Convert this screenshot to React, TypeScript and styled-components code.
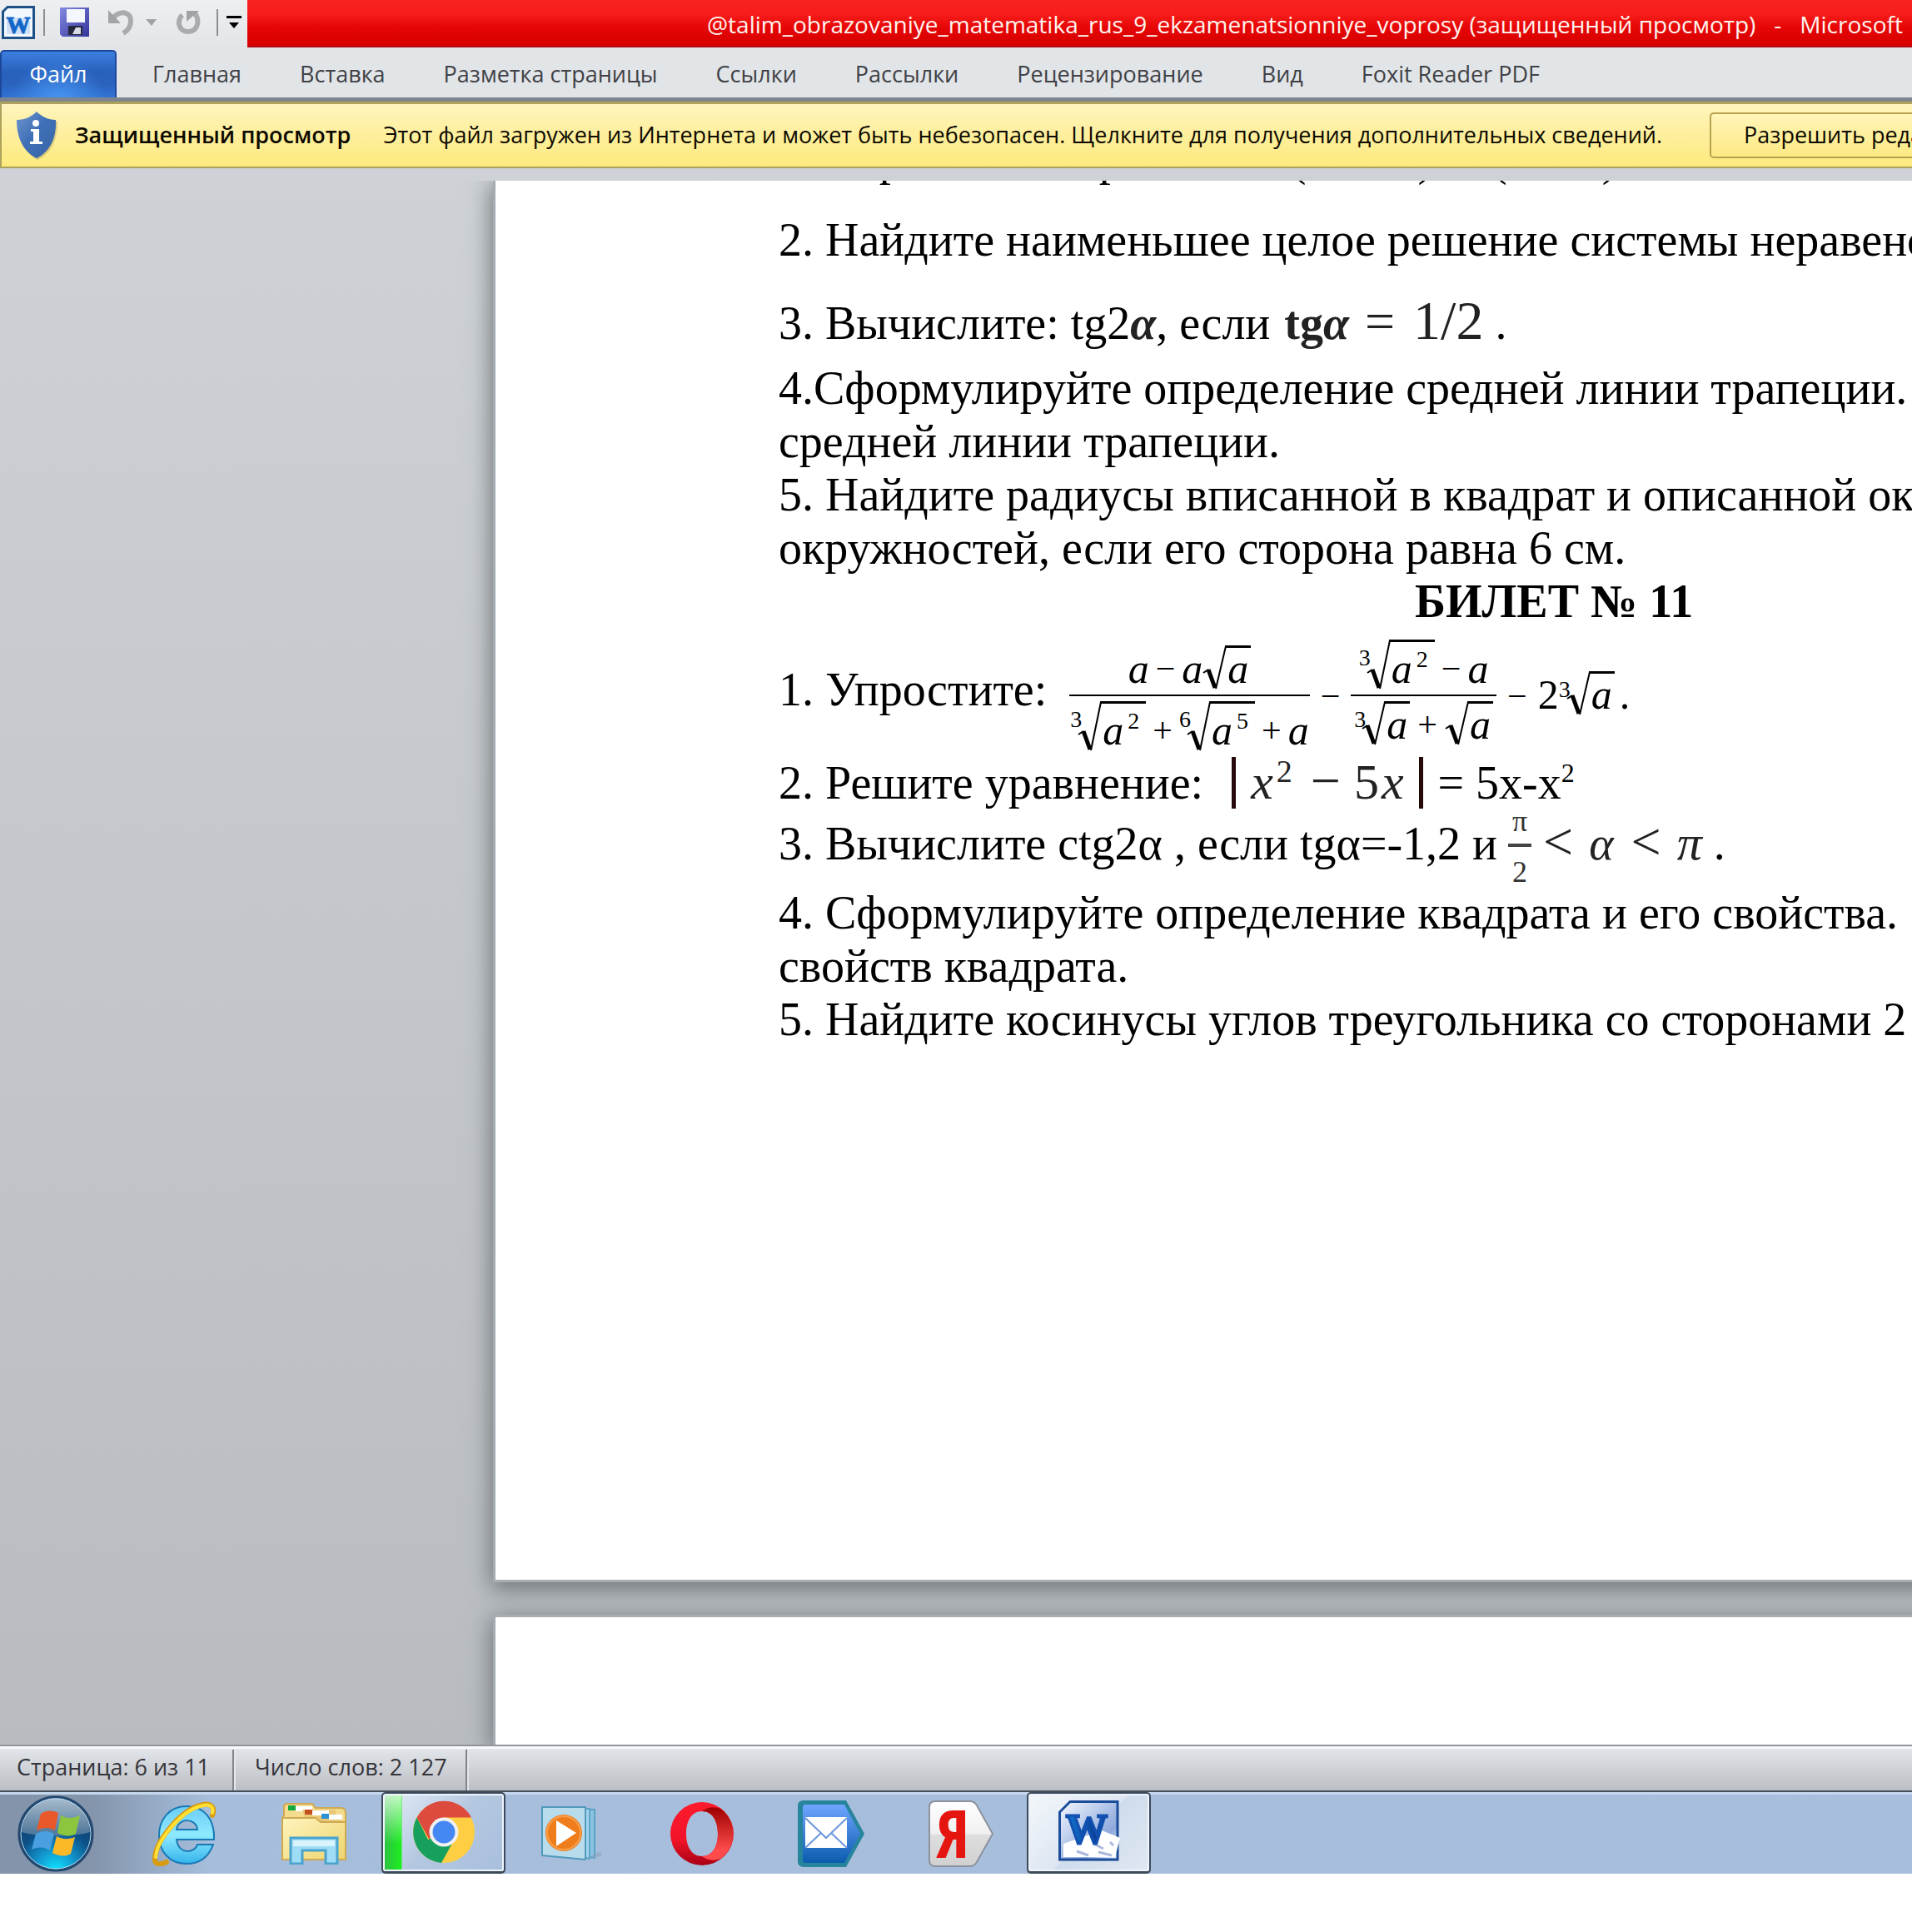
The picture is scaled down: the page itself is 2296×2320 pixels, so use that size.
import React from "react";
import styled, { createGlobalStyle, css } from "styled-components";

const UI_FONT = `"Open Sans", "Noto Sans", sans-serif`;
const DOC_FONT = `"Liberation Serif", "Times New Roman", serif`;

const GlobalStyle = createGlobalStyle`
  *, *::before, *::after { box-sizing: border-box; }
  body { margin: 0; background: #fff; font-family: ${UI_FONT}; }
  button { font: inherit; color: inherit; border: 0; background: none; padding: 0; margin: 0; cursor: pointer; }
  svg { display: block; flex: none; }
`;

const Screen = styled.div`
  display: flex;
  flex-direction: column;
  min-height: 100vh;
  padding-bottom: 70px;
  overflow: hidden;
  white-space: nowrap;
`;

/* ---------- title bar ---------- */

const TitleBar = styled.header`
  display: flex;
  height: 57px;
  background: linear-gradient(#eeeff1, #e2e5e8);
`;

const QuickAccess = styled.div`
  display: flex;
  align-items: center;
  flex: none;
  width: 297px;
  padding: 0 6px 4px 2px;
`;

const QuickButton = styled.button<{ $gap?: number }>`
  display: flex;
  margin-left: ${(p) => p.$gap ?? 0}px;
`;

const QuickDivider = styled.span<{ $gap: number }>`
  width: 2px;
  height: 32px;
  margin-left: ${(p) => p.$gap}px;
  background: #8e8e90;
`;

const Caption = styled.h1`
  display: flex;
  flex: 1;
  gap: 22px;
  min-width: 0;
  margin: 0;
  padding-left: 552px;
  overflow: hidden;
  font-size: 28px;
  font-weight: 400;
  line-height: 58px;
  color: #fff3ee;
  border-bottom: 2px solid #b50a12;
  background: linear-gradient(#f92320 0%, #f61d1b 30%, #e60606 60%, #d60000 100%);
`;

/* ---------- ribbon tabs ---------- */

const Tabs = styled.nav`
  display: flex;
  height: 65px;
  padding-top: 3px;
  background: #e2e5e8;
  border-bottom: 5px solid #7e858f;
`;

const tabText = css`
  font-size: 27px;
  line-height: 54px;
`;

const FileTab = styled.button`
  ${tabText}
  width: 140px;
  margin-right: 8px;
  padding-bottom: 4px;
  color: #fff;
  border: 2px solid #1c479c;
  border-bottom: 0;
  border-radius: 5px 5px 0 0;
  background: radial-gradient(ellipse at 50% 110%, #4795f2 0%, rgba(71, 149, 242, 0) 60%),
    linear-gradient(#3c7fdf 0%, #2861bb 45%, #2a62bd 70%, #3173d3 100%);
`;

const Tab = styled.button`
  ${tabText}
  padding: 0 35px;
  color: #404146;
`;

/* ---------- protected view bar ---------- */

const MessageBar = styled.div`
  display: flex;
  align-items: center;
  height: 80px;
  padding-left: 18px;
  border: solid #ada15c;
  border-width: 3px 0 2px 2px;
  background: linear-gradient(#fff4bd, #fdea7d);
  font-size: 27px;
  color: #0d0a00;
`;

const MessageTitle = styled.strong`
  margin-left: 21px;
  padding-bottom: 3px;
  font-weight: 600;
`;

const MessageText = styled.span`
  margin-left: 39px;
  padding-bottom: 3px;
`;

const EnableButton = styled.button`
  height: 55px;
  margin-left: 57px;
  padding: 0 39px 3px;
  border: 2px solid #b5a34d;
  border-radius: 5px;
  background: linear-gradient(#fff5b8, #fdea83);
`;

/* ---------- document ---------- */

const Workspace = styled.main`
  display: flex;
  flex-direction: column;
  flex: 1;
  min-height: 0;
  padding-top: 15px;
  background: linear-gradient(#ced2d6, #b8bcc1);
`;

const Sheets = styled.div`
  display: flex;
  flex-direction: column;
  flex: 1;
  gap: 39px;
  padding-left: 592px;
  overflow: hidden;
`;

const Sheet = styled.article<{ $last?: boolean }>`
  flex: ${(p) => (p.$last ? "1 0 60px" : "none")};
  height: ${(p) => (p.$last ? "auto" : "1683px")};
  margin-right: -40px;
  padding-left: 340px;
  overflow: hidden;
  border-left: 3px solid #a3abb3;
  border-top: ${(p) => (p.$last ? "3px solid #a9adb2" : "0")};
  border-bottom: ${(p) => (p.$last ? "0" : "3px solid #a9adb1")};
  background: #fff;
  box-shadow: 0 6px 26px 2px #6f7477;
  font-family: ${DOC_FONT};
  font-size: 56px;
  line-height: 64px;
  color: #000;
`;

const Paragraph = styled.p<{ $after?: number; $cut?: boolean }>`
  margin: ${(p) => (p.$cut ? "-58px" : "0")} 0 ${(p) => p.$after ?? 0}px;
`;

const TicketTitle = styled.h2`
  margin: 0 0 0 764px;
  font-size: 56px;
  font-weight: 700;
  line-height: 64px;
`;

const Blank = styled.span<{ $w: number }>`
  display: inline-block;
  width: ${(p) => p.$w}px;
`;

const Cambria = styled.span<{ $size?: number; $bold?: boolean; $italic?: boolean; $left?: number }>`
  margin-left: ${(p) => p.$left ?? 0}px;
  font-size: ${(p) => p.$size ?? 56}px;
  font-weight: ${(p) => (p.$bold ? 700 : 400)};
  font-style: ${(p) => (p.$italic ? "italic" : "normal")};
  line-height: 0;
  color: #222;
`;

const Power = styled.sup<{ $size?: number }>`
  font-size: ${(p) => p.$size ?? 32}px;
  line-height: 0;
`;

const Bar = styled.span<{ $left: number }>`
  display: inline-block;
  width: 5px;
  height: 62px;
  margin: -10px 18px 0 ${(p) => p.$left}px;
  vertical-align: -12px;
  background: #26090a;
`;

/* ---------- equation ---------- */

const EquationRow = styled.div`
  display: flex;
  align-items: center;
  height: 154px;
`;

const EquationLabel = styled.span`
  padding-bottom: 6px;
`;

const Equation = styled.div`
  display: flex;
  align-items: center;
  gap: 13px;
  margin-left: 27px;
  padding-top: 10px;
  font-size: 50px;
  line-height: 50px;
`;

const Fraction = styled.div`
  display: flex;
  flex-direction: column;
`;

const FractionPart = styled.div<{ $top?: boolean; $pad?: number }>`
  display: flex;
  align-items: ${(p) => (p.$top ? "flex-end" : "flex-start")};
  justify-content: center;
  height: 68px;
  padding: ${(p) => (p.$top ? "0 0 6px" : `6px ${p.$pad ?? 1}px 0`)};
  border-bottom: ${(p) => (p.$top ? "2px solid #000" : "0")};
`;

const Row = styled.span<{ $gap?: number; $lift?: boolean }>`
  display: flex;
  align-items: flex-end;
  gap: ${(p) => p.$gap ?? 0}px;
  padding-bottom: ${(p) => (p.$lift ? 8 : 0)}px;
`;

const Var = styled.i`
  display: block;
`;

const Sign = styled.span`
  display: block;
  font-size: 42px;
`;

const RootBox = styled.span`
  display: flex;
  align-items: stretch;
`;

const RootIndex = styled.span`
  width: 9px;
  padding-top: 5px;
  font-size: 28px;
  line-height: 34px;
`;

const Radicand = styled.span<{ $wide?: boolean }>`
  display: flex;
  padding: ${(p) => (p.$wide ? "7px 8px 0 1px" : "0 3px 0 1px")};
  border-top: 3px solid #000;
`;

const RadicandPower = styled.span`
  margin-left: 5px;
  font-size: 28px;
  line-height: 28px;
`;

const SmallFraction = styled.span`
  display: inline-flex;
  flex-direction: column;
  align-items: center;
  width: 28px;
  margin: -30px 0 -30px 13px;
  vertical-align: middle;
  font-size: 36px;
  line-height: 44px;
  color: #333;
`;

const SmallTop = styled.span`
  width: 28px;
  margin-bottom: 8px;
  padding-bottom: 10px;
  border-bottom: 4px solid #444;
  line-height: 34px;
  text-align: center;
`;

function Root({ index, power }: { index?: string; power?: string }) {
  const h = power ? 56 : 49;
  return (
    <RootBox>
      {index && <RootIndex>{index}</RootIndex>}
      <svg width="29" height={h + 4} viewBox={`0 0 29 ${h + 4}`} fill="none" stroke="#000">
        <path d={`M1 ${h - 16} L7 ${h - 20}`} strokeWidth="2" />
        <path d={`M7 ${h - 20} L15 ${h + 2}`} strokeWidth="5" />
        <path d={`M16 ${h + 3} L28 1`} strokeWidth="2" />
        <path d="M27 1.5 H29" strokeWidth="3" />
      </svg>
      <Radicand $wide={!!power}>
        <Var>a</Var>
        {power && <RadicandPower>{power}</RadicandPower>}
      </Radicand>
    </RootBox>
  );
}

/* ---------- status bar ---------- */

const StatusBar = styled.footer`
  display: flex;
  height: 57px;
  border-top: 2px solid #90959b;
  border-bottom: 2px solid #454e59;
  box-shadow: inset 0 3px 0 #f7f9fd;
  background: linear-gradient(#e4e7eb, #bbbfc4);
`;

const StatusItem = styled.button<{ $first?: boolean }>`
  margin-top: 4px;
  padding: 0 ${(p) => (p.$first ? 27 : 22)}px 8px ${(p) => (p.$first ? 20 : 25)}px;
  border-right: 2px solid #80848a;
  box-shadow: 2px 0 0 #e4e6ea;
  font-size: 27px;
  line-height: 40px;
  color: #36343a;
`;

/* ---------- taskbar ---------- */

const Taskbar = styled.nav`
  display: flex;
  height: 98px;
  border-top: 3px solid #c5d7ec;
  background: linear-gradient(90deg, #8394ab 0, #8394ab 110px, #a6bedb 250px, #a7bfdc 100%);
`;

const TaskButton = styled.button<{ $width: number; $gap?: number; $active?: "chrome" | "word" }>`
  display: flex;
  align-items: center;
  justify-content: center;
  flex: none;
  width: ${(p) => p.$width}px;
  margin-left: ${(p) => p.$gap ?? 0}px;
  padding-bottom: 2px;
  ${(p) =>
    p.$active &&
    css`
      margin-top: -3px;
      border: 2px solid #3d4a5c;
      border-bottom-width: 3px;
      border-radius: 5px;
      box-shadow: inset 0 0 0 2px #eef4fc;
      background: ${p.$active === "word"
        ? "linear-gradient(135deg, #f4f7fb 0%, #dde6f2 50%, #cfdcec 52%, #e0e8f3 100%)"
        : "linear-gradient(rgba(255,255,255,.75) 0, rgba(255,255,255,0) 60px) 0 0 / 22px 100% no-repeat, linear-gradient(90deg, #2ebd45 0, #1df01d 22px, rgba(0,0,0,0) 23px), linear-gradient(135deg, #e6eef8 0%, #b4c7e0 50%, #a8bfdd 100%)"};
    `}
`;

/* ---------- icons ---------- */

const WordSmall = () => (
  <svg width="40" height="40" viewBox="0 0 40 40">
    <path d="M7 1.5H38.500V38.500H1.500V7Z" fill="#f3f8ff" stroke="#1f5189" strokeWidth="3" />
    <rect x="6" y="14" width="28" height="20" fill="#cfe0f6" />
    <text x="20" y="33" textAnchor="middle" fontFamily="Liberation Serif" fontWeight="700" fontSize="29" fill="#1367c8" stroke="#1367c8">W</text>
  </svg>
);

const SaveIcon = () => (
  <svg width="36" height="36" viewBox="0 0 36 36">
    <defs>
      <linearGradient id="save" x1="0" x2="1" y2="1">
        <stop offset="0" stopColor="#8489e0" />
        <stop offset="1" stopColor="#34349c" />
      </linearGradient>
    </defs>
    <path d="M0 0H35V35H3L0 32Z" fill="url(#save)" />
    <rect x="8" y="2" width="22" height="16" fill="#f4f7fd" />
    <rect x="10" y="22" width="17" height="11" fill="#25283c" />
    <path d="M19 24H25V32H15Z" fill="#d8dbe6" />
  </svg>
);

const UndoIcon = () => (
  <svg width="32" height="32" viewBox="0 0 32 32">
    <path d="M7 10C16 1 28 3 28 14C28 21 24 26 19 29" fill="none" stroke="#aaabad" strokeWidth="6" />
    <path d="M1 1V17H16Z" fill="#a2a3a5" />
  </svg>
);

const RepeatIcon = () => (
  <svg width="30" height="32" viewBox="0 0 30 32">
    <path d="M8 7C1 13 3 27 15 27C27 27 29 13 23 5" fill="none" stroke="#aaabad" strokeWidth="6" />
    <path d="M13 15V2H28Z" fill="#a2a3a5" />
  </svg>
);

const SmallArrow = () => (
  <svg width="13" height="8" viewBox="0 0 13 8">
    <path d="M0 0H13L7 8Z" fill="#a0a1a4" />
  </svg>
);

const CustomizeIcon = () => (
  <svg width="18" height="16" viewBox="0 0 18 16">
    <path d="M0 0H18V3H0ZM3 8H15L9 15Z" fill="#000" />
  </svg>
);

const ShieldIcon = () => (
  <svg width="49" height="58" viewBox="0 0 49 58">
    <defs>
      <linearGradient id="shield" x1="0" x2="1" y2="1">
        <stop offset="0" stopColor="#6f97cf" />
        <stop offset="0.45" stopColor="#3f70b7" />
        <stop offset="1" stopColor="#3863a4" />
      </linearGradient>
    </defs>
    <path d="M24 3C30 9 38 12 49 12C49 34 42 50 25 58C10 50 2 34 2 12C12 12 19 9 24 3Z" fill="#a89d63" opacity=".45" />
    <path d="M24 0C30 6 38 10 47 10C48 32 40 48 24 56C8 48 0 32 0 10C10 10 18 6 24 0Z" fill="url(#shield)" />
    <circle cx="23" cy="14" r="4" fill="#fff" />
    <path d="M17 21H27V36H31V39H16V36H20V24H17Z" fill="#fff" />
  </svg>
);

const StartIcon = () => (
  <svg width="92" height="92" viewBox="0 0 92 92">
    <defs>
      <radialGradient id="orb" cx=".5" cy="1" r=".9">
        <stop offset="0" stopColor="#0fe6ff" />
        <stop offset=".3" stopColor="#1298cf" />
        <stop offset=".62" stopColor="#0c4f86" />
        <stop offset="1" stopColor="#1b4068" />
      </radialGradient>
      <linearGradient id="gloss" x2="0" y2="1">
        <stop offset="0" stopColor="#d7e6f1" />
        <stop offset="1" stopColor="#5d809c" />
      </linearGradient>
    </defs>
    <circle cx="46" cy="46" r="44" fill="url(#orb)" stroke="#23476e" strokeWidth="3" />
    <path d="M5 44A41 41 0 0 1 87 44C70 50 22 50 5 44Z" fill="url(#gloss)" opacity=".75" />
    <circle cx="46" cy="46" r="42" fill="none" stroke="#b5d6ea" strokeWidth="1" />
    <path d="M28 22C35 17 43 18 49 21L45 42C38 38 31 38 23 42Z" fill="#e9582a" />
    <path d="M52 24C59 28 67 28 75 24L70 46C63 50 55 49 48 45Z" fill="#8cc63f" />
    <path d="M22 46C30 42 37 42 44 46L39 66C33 62 26 61 17 65Z" fill="#4a9fe0" />
    <path d="M47 49C54 53 61 53 69 50L64 70C57 74 49 73 42 69Z" fill="#fdb827" />
  </svg>
);

const ExplorerEIcon = () => (
  <svg width="78" height="78" viewBox="0 0 78 78">
    <defs>
      <linearGradient id="ie" x2="0" y2="1">
        <stop offset="0" stopColor="#6bcdf5" />
        <stop offset=".5" stopColor="#8eeaff" />
        <stop offset="1" stopColor="#35b4ec" />
      </linearGradient>
    </defs>
    <path d="M75 46H30C32 64 52 63 55 52H74C68 68 57 75 42 75C22 75 9 61 9 41C9 20 23 6 42 6C63 6 76 21 75 46ZM30 34H55C54 20 32 19 30 34Z" fill="url(#ie)" stroke="#1979b4" strokeWidth="2" />
    <path d="M73 17C77 6 70 1 58 5C34 12 5 48 4 68C3 76 10 77 18 73" fill="none" stroke="#d89b12" strokeWidth="6" strokeLinecap="round" />
    <path d="M73 14C75 6 69 2 58 6C34 13 6 48 5 67" fill="none" stroke="#ffe033" strokeWidth="4" strokeLinecap="round" />
  </svg>
);

const FolderIcon = () => (
  <svg width="80" height="74" viewBox="0 0 80 74">
    <defs>
      <linearGradient id="folder" x2="1" y2="1">
        <stop offset="0" stopColor="#fff4bd" />
        <stop offset="1" stopColor="#edd46f" />
      </linearGradient>
    </defs>
    <path d="M4 4Q4 1 8 1H38L42 6H72Q78 6 78 12V68H2V18L4 15Z" fill="#f3dc8d" stroke="#cfa951" strokeWidth="2" />
    <rect x="18" y="4" width="20" height="6" fill="#fff" /><rect x="9" y="3" width="9" height="6" fill="#12a83b" />
    <path d="M26 8H66V14H74V22H30Z" fill="#e9c977" />
    <rect x="38" y="9" width="20" height="6" fill="#fff" /><rect x="29" y="8" width="9" height="6" fill="#c5501f" />
    <rect x="58" y="14" width="16" height="6" fill="#fff" /><rect x="49" y="13" width="9" height="6" fill="#2c8fd4" />
    <path d="M2 18H42L48 23H78V68H2Z" fill="url(#folder)" stroke="#cfa951" strokeWidth="2" />
    <path d="M12 73V42H68V73H54V57H26V73Z" fill="#9fdcf5" stroke="#4ba3cc" strokeWidth="3" />
    <path d="M15 45H65V52H15Z" fill="#d8f3fc" />
  </svg>
);

const ChromeIcon = () => (
  <svg width="76" height="76" viewBox="0 0 76 76">
    <circle cx="38" cy="38" r="37" fill="#ffce43" />
    <path d="M38 38L19 47L5.600 20.500A37 37 0 0 0 35 74.900L50 48Z" fill="#17a05d" />
    <path d="M38 38L20 46L5.600 20.500A37 37 0 0 1 71 20.500H38Z" fill="#dc4b3e" />
    <circle cx="38" cy="38" r="17.500" fill="#f1f1f1" />
    <circle cx="38" cy="38" r="13.500" fill="#4587f3" />
  </svg>
);

const MediaIcon = () => (
  <svg width="72" height="66" viewBox="0 0 72 66">
    <path d="M12 4H64V62L52 60Z" fill="#8cc3e0" stroke="#5ba3c8" strokeWidth="2" />
    <path d="M8 3H58V63L46 60Z" fill="#a5d3ea" stroke="#5ba3c8" strokeWidth="2" />
    <path d="M1 1H53V64L1 59Z" fill="#b9dcec" stroke="#5199bd" strokeWidth="2" />
    <path d="M62 58L72 54V60L58 63Z" fill="#889bb5" opacity=".5" />
    <circle cx="27" cy="32" r="22" fill="#f07d1c" />
    <circle cx="27" cy="32" r="20" fill="none" stroke="#fb9e48" strokeWidth="2" />
    <path d="M18 17V48L42 32Z" fill="#fff" />
  </svg>
);

const OperaIcon = () => (
  <svg width="76" height="76" viewBox="0 0 76 76">
    <defs>
      <linearGradient id="operaL" x2="0" y2="1">
        <stop offset="0" stopColor="#ff1b2d" /><stop offset=".6" stopColor="#f01428" /><stop offset="1" stopColor="#a70014" />
      </linearGradient>
      <linearGradient id="operaR" x2="0" y2="1">
        <stop offset="0" stopColor="#9c0000" /><stop offset=".8" stopColor="#ff4b4b" />
      </linearGradient>
    </defs>
    <path fillRule="evenodd" d="M38 0A38 38 0 1 0 38 76A38 38 0 1 0 38 0ZM38 11C50 11 57 22 57 38S50 65 38 65S19 54 19 38S26 11 38 11Z" fill="url(#operaL)" />
    <path d="M38 11C44 6 55 4 63 10A38 38 0 0 1 63 66C55 72 44 70 38 65C50 65 57 54 57 38S50 11 38 11Z" fill="url(#operaR)" />
  </svg>
);

const MailIcon = () => (
  <svg width="80" height="80" viewBox="0 0 80 80">
    <defs>
      <linearGradient id="mail" x2="0" y2="1">
        <stop offset="0" stopColor="#6ea5ff" /><stop offset="1" stopColor="#0a5caf" />
      </linearGradient>
    </defs>
    <path d="M7 0H58L80 40L58 80H7Q0 80 0 73V7Q0 0 7 0Z" fill="#27849d" />
    <path d="M9 5H56L75 40L56 75H9Q6 75 6 71V9Q6 5 9 5Z" fill="url(#mail)" />
    <rect x="9" y="20" width="50" height="37" fill="#fff" />
    <path d="M9 21L34 45L59 21M9 57L28 39M59 57L40 39" fill="none" stroke="#6d96dd" strokeWidth="2" />
  </svg>
);

const YandexIcon = () => (
  <svg width="78" height="80" viewBox="0 0 78 80">
    <defs>
      <linearGradient id="ya" x2="0" y2="1">
        <stop offset="0" stopColor="#fff" /><stop offset=".5" stopColor="#f0f0f0" /><stop offset=".52" stopColor="#dedede" /><stop offset="1" stopColor="#d0d0d0" />
      </linearGradient>
    </defs>
    <path d="M8 1H50Q55 1 58 6L77 40L58 74Q55 79 50 79H8Q1 79 1 72V8Q1 1 8 1Z" fill="url(#ya)" stroke="#8d929e" strokeWidth="2" />
    <text x="29" y="69" textAnchor="middle" fontFamily="Liberation Sans Narrow, Open Sans Condensed, Roboto Condensed, Liberation Sans" fontSize="80" fill="#e5150f">Я</text>
  </svg>
);

const WordLargeIcon = () => (
  <svg width="74" height="76" viewBox="0 0 74 76">
    <defs>
      <linearGradient id="word" x2="1" y2="1">
        <stop offset="0" stopColor="#f4f8ff" /><stop offset=".7" stopColor="#8ea9dc" /><stop offset="1" stopColor="#f4f8ff" />
      </linearGradient>
      <linearGradient id="wordW" x2="1">
        <stop offset="0" stopColor="#0f78d0" /><stop offset="1" stopColor="#0b2a86" />
      </linearGradient>
    </defs>
    <path d="M14 2H72V73H1V15Z" fill="#8f99a8" opacity=".5" />
    <path d="M14 1.500H71V71H1.500V14Z" fill="url(#word)" stroke="#1c4d9b" strokeWidth="3" />
    <path d="M6 52L52 36L74 45L68 68H6Z" fill="#fff" />
    <path d="M22 61L36 66M42 52L54 58M48 62L64 66M62 50L66 54" stroke="#aab8dc" strokeWidth="3" />
    <text x="34" y="51" textAnchor="middle" fontFamily="Liberation Serif" fontWeight="700" fontSize="50" fill="url(#wordW)" stroke="#1251b0" strokeWidth="3">W</text>
  </svg>
);

const TABS = ["Главная", "Вставка", "Разметка страницы", "Ссылки", "Рассылки", "Рецензирование", "Вид", "Foxit Reader PDF"];

export default function App() {
  return (
    <>
      <GlobalStyle />
      <Screen>
        <TitleBar>
          <QuickAccess>
            <QuickButton aria-label="Word"><WordSmall /></QuickButton>
            <QuickDivider $gap={10} />
            <QuickButton $gap={18} aria-label="Сохранить"><SaveIcon /></QuickButton>
            <QuickButton $gap={21} aria-label="Отменить"><UndoIcon /></QuickButton>
            <QuickButton $gap={14} aria-label="Список отмены"><SmallArrow /></QuickButton>
            <QuickButton $gap={23} aria-label="Повторить"><RepeatIcon /></QuickButton>
            <QuickDivider $gap={19} />
            <QuickButton $gap={10} aria-label="Настройка панели"><CustomizeIcon /></QuickButton>
          </QuickAccess>
          <Caption>
            <span>@talim_obrazovaniye_matematika_rus_9_ekzamenatsionniye_voprosy (защищенный просмотр)</span>
            <span>-</span>
            <span>Microsoft</span>
          </Caption>
        </TitleBar>

        <Tabs>
          <FileTab>Файл</FileTab>
          {TABS.map((t) => (
            <Tab key={t}>{t}</Tab>
          ))}
        </Tabs>

        <MessageBar>
          <ShieldIcon />
          <MessageTitle>Защищенный просмотр</MessageTitle>
          <MessageText>
            Этот файл загружен из Интернета и может быть небезопасен. Щелкните для получения дополнительных сведений.
          </MessageText>
          <EnableButton>Разрешить редактирование</EnableButton>
        </MessageBar>

        <Workspace>
          <Sheets>
            <Sheet>
              <Paragraph $cut $after={33}>
                1. Упростите выражение: (<Blank $w={134} />)<Blank $w={70} />(<Blank $w={114} />)
              </Paragraph>
              <Paragraph $after={36}>2. Найдите наименьшее целое решение системы неравенств</Paragraph>
              <Paragraph $after={14}>
                3. Вычислите: tg2<Cambria $italic $bold>α</Cambria>, если <Cambria $bold $left={3}>tg</Cambria>
                <Cambria $italic $bold>α</Cambria> <Cambria $size={64} $left={5}>=</Cambria>{" "}
                <Cambria $size={66} $left={8}>1/2</Cambria> .
              </Paragraph>
              <Paragraph>
                4.Сформулируйте определение средней линии трапеции.
                <br />
                средней линии трапеции.
              </Paragraph>
              <Paragraph>
                5. Найдите радиусы вписанной в квадрат и описанной около
                <br />
                окружностей, если его сторона равна 6 см.
              </Paragraph>
              <TicketTitle>БИЛЕТ № 11</TicketTitle>
              <EquationRow>
                <EquationLabel>1. Упростите:</EquationLabel>
                <Equation>
                  <Fraction>
                    <FractionPart $top>
                      <Row $gap={8}>
                        <Var>a</Var><Sign>−</Sign>
                        <Row><Var>a</Var><Root /></Row>
                      </Row>
                    </FractionPart>
                    <FractionPart>
                      <Row $gap={8}>
                        <Root index="3" power="2" /><Sign>+</Sign>
                        <Root index="6" power="5" /><Sign>+</Sign><Var>a</Var>
                      </Row>
                    </FractionPart>
                  </Fraction>
                  <Sign>−</Sign>
                  <Fraction>
                    <FractionPart $top>
                      <Row $gap={8}>
                        <Root index="3" power="2" /><Sign>−</Sign><Var>a</Var>
                      </Row>
                    </FractionPart>
                    <FractionPart $pad={4}>
                      <Row $gap={9}>
                        <Root index="3" /><Sign>+</Sign><Root />
                      </Row>
                    </FractionPart>
                  </Fraction>
                  <Sign>−</Sign>
                  <Row $lift $gap={6}>
                    <Row>2<Root index="3" /></Row>
                    <span>.</span>
                  </Row>
                </Equation>
              </EquationRow>
              <Paragraph $after={9}>
                2. Решите уравнение:<Bar $left={34} />
                <Cambria $italic $size={60}>x</Cambria>
                <Cambria $left={4}><Power $size={38}>2</Power></Cambria> <Cambria $size={64} $left={8}>−</Cambria>{" "}
                <Cambria $size={60} $left={2}>5</Cambria>
                <Cambria $italic $size={60} $left={3}>x</Cambria>
                <Bar $left={18} />= 5х-х<Power>2</Power>
              </Paragraph>
              <Paragraph $after={19}>
                3. Вычислите ctg2α , если tgα=-1,2 и
                <SmallFraction><SmallTop>π</SmallTop>2</SmallFraction> <Cambria $size={64}>&lt;</Cambria>{" "}
                <Cambria $italic $left={5}>α</Cambria> <Cambria $size={64} $left={7}>&lt;</Cambria>{" "}
                <Cambria $italic $size={60} $left={5}>π</Cambria> .
              </Paragraph>
              <Paragraph>
                4. Сформулируйте определение квадрата и его свойства.
                <br />
                свойств квадрата.
              </Paragraph>
              <Paragraph>5. Найдите косинусы углов треугольника со сторонами 2</Paragraph>
            </Sheet>
            <Sheet $last />
          </Sheets>
        </Workspace>

        <StatusBar>
          <StatusItem $first>Страница: 6 из 11</StatusItem>
          <StatusItem>Число слов: 2 127</StatusItem>
        </StatusBar>

        <Taskbar>
          <TaskButton $width={134} aria-label="Пуск"><StartIcon /></TaskButton>
          <TaskButton $width={174} aria-label="Internet Explorer"><ExplorerEIcon /></TaskButton>
          <TaskButton $width={138} aria-label="Проводник"><FolderIcon /></TaskButton>
          <TaskButton $width={149} $gap={12} $active="chrome" aria-label="Google Chrome"><ChromeIcon /></TaskButton>
          <TaskButton $width={158} aria-label="Проигрыватель"><MediaIcon /></TaskButton>
          <TaskButton $width={156} aria-label="Opera"><OperaIcon /></TaskButton>
          <TaskButton $width={154} aria-label="Почта"><MailIcon /></TaskButton>
          <TaskButton $width={158} aria-label="Яндекс"><YandexIcon /></TaskButton>
          <TaskButton $width={149} $active="word" aria-label="Microsoft Word"><WordLargeIcon /></TaskButton>
        </Taskbar>
      </Screen>
    </>
  );
}
